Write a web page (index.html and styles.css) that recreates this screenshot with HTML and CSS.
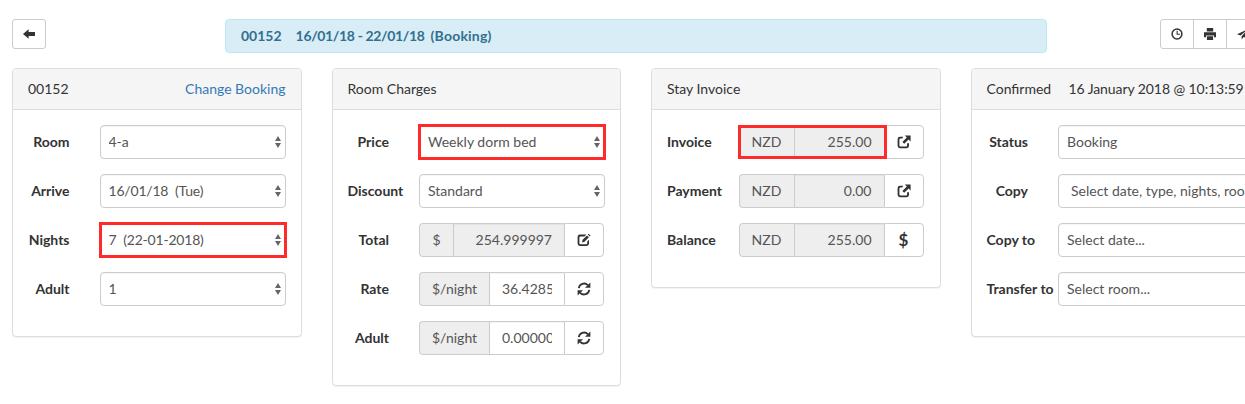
FILE: index.html
```html
<!DOCTYPE html>
<html lang="en">

<head>
    <meta charset="UTF-8">
    <meta name="viewport" content="width=device-width, initial-scale=1.0">
    <title>Booking 00152</title>
    <link rel="stylesheet" href="styles.css">
</head>

<body>
    <!-- Top bar -->
    <div class="top-bar">
        <button class="tool-btn back-btn" aria-label="Back">
            <svg class="icon" viewBox="0 0 12 12"><path d="M0 6 5.6 1.2V4H12V8H5.6V10.8Z" /></svg>
        </button>
        <div class="booking-alert">
            <span class="alert-number">00152</span>
            <span class="alert-dates">16/01/18 - 22/01/18</span>
            <span class="alert-state">(Booking)</span>
        </div>
        <div class="tool-group">
            <button class="tool-btn" aria-label="History">
                <svg class="icon" viewBox="0 0 12 12"><circle cx="6" cy="6" r="4.9" fill="none" stroke="#333" stroke-width="1.5" /><path d="M5.6 2.8H6.7V5.7H9V6.8H5.6Z" /></svg>
            </button>
            <button class="tool-btn" aria-label="Print">
                <svg class="icon" viewBox="0 0 12 12"><path d="M2.8 0H9.2V3.4H2.8ZM0 4.2H12V9.2H10V7.4H2V9.2H0ZM2.9 8.2H9.1V12H2.9Z" /></svg>
            </button>
            <button class="tool-btn" aria-label="Send">
                <svg class="icon" viewBox="0 0 12 12"><path d="M12 .5 0 6.2 3.6 7.4 10 2.2 4.6 8.2V11.6L6.7 9 9.4 10.2Z" /></svg>
            </button>
        </div>
    </div>

    <!-- Panels -->
    <div class="panels">
        <div class="panel">
            <div class="panel-heading">
                <span>00152</span>
                <a href="#">Change Booking</a>
            </div>
            <div class="panel-body">
                <div class="form-row">
                    <label>Room</label>
                    <select class="field"><option>4-a</option></select>
                </div>
                <div class="form-row">
                    <label>Arrive</label>
                    <select class="field date-field"><option>16/01/18&nbsp; (Tue)</option></select>
                </div>
                <div class="form-row">
                    <label>Nights</label>
                    <select class="field date-field marked"><option>7&nbsp; (22-01-2018)</option></select>
                </div>
                <div class="form-row">
                    <label>Adult</label>
                    <select class="field"><option>1</option></select>
                </div>
            </div>
        </div>

        <div class="panel">
            <div class="panel-heading"><span>Room Charges</span></div>
            <div class="panel-body">
                <div class="form-row">
                    <label>Price</label>
                    <select class="field marked"><option>Weekly dorm bed</option></select>
                </div>
                <div class="form-row">
                    <label>Discount</label>
                    <select class="field"><option>Standard</option></select>
                </div>
                <div class="form-row">
                    <label>Total</label>
                    <div class="input-group">
                        <span class="addon addon-sign">$</span>
                        <input type="text" value="254.999997" readonly>
                        <button class="group-btn" aria-label="Edit">
                            <svg class="icon" viewBox="0 0 14 14"><use href="#icon-edit" /></svg>
                        </button>
                    </div>
                </div>
                <div class="form-row">
                    <label>Rate</label>
                    <div class="input-group">
                        <span class="addon addon-night">$/night</span>
                        <input type="text" value="36.428571">
                        <button class="group-btn" aria-label="Refresh">
                            <svg class="icon" viewBox="0 0 14 14"><use href="#icon-refresh" /></svg>
                        </button>
                    </div>
                </div>
                <div class="form-row">
                    <label>Adult</label>
                    <div class="input-group">
                        <span class="addon addon-night">$/night</span>
                        <input type="text" value="0.000000">
                        <button class="group-btn" aria-label="Refresh">
                            <svg class="icon" viewBox="0 0 14 14"><use href="#icon-refresh" /></svg>
                        </button>
                    </div>
                </div>
            </div>
        </div>

        <div class="panel">
            <div class="panel-heading"><span>Stay Invoice</span></div>
            <div class="panel-body">
                <div class="form-row">
                    <label>Invoice</label>
                    <div class="input-group">
                        <div class="group-part marked-part">
                            <span class="addon addon-cur">NZD</span>
                            <input type="text" value="255.00" readonly>
                        </div>
                        <button class="group-btn" aria-label="Open invoice">
                            <svg class="icon" viewBox="0 0 14 14"><use href="#icon-open" /></svg>
                        </button>
                    </div>
                </div>
                <div class="form-row">
                    <label>Payment</label>
                    <div class="input-group">
                        <span class="addon addon-cur">NZD</span>
                        <input type="text" value="0.00" readonly>
                        <button class="group-btn" aria-label="Open payment">
                            <svg class="icon" viewBox="0 0 14 14"><use href="#icon-open" /></svg>
                        </button>
                    </div>
                </div>
                <div class="form-row">
                    <label>Balance</label>
                    <div class="input-group">
                        <span class="addon addon-cur">NZD</span>
                        <input type="text" value="255.00" readonly>
                        <button class="group-btn dollar-btn">$</button>
                    </div>
                </div>
            </div>
        </div>

        <div class="panel">
            <div class="panel-heading heading-start">
                <span class="status-name">Confirmed</span>
                <span class="status-date">16 January 2018 @ 10:13:59</span>
            </div>
            <div class="panel-body">
                <div class="form-row">
                    <label>Status</label>
                    <select class="field"><option>Booking</option></select>
                </div>
                <div class="form-row">
                    <label>Copy</label>
                    <button class="field copy-btn">Select date, type, nights, room...</button>
                </div>
                <div class="form-row">
                    <label>Copy to</label>
                    <select class="field"><option>Select date...</option></select>
                </div>
                <div class="form-row">
                    <label>Transfer to</label>
                    <select class="field"><option>Select room...</option></select>
                </div>
            </div>
        </div>
    </div>

    <!-- Shared icons -->
    <svg class="icon-defs" aria-hidden="true">
        <symbol id="icon-edit" viewBox="0 0 14 14">
            <path d="M9.3 1.6H3A2.4 2.4 0 0 0 .6 4V10.6A2.4 2.4 0 0 0 3 13H9.6A2.4 2.4 0 0 0 12 10.6V6.8L10.2 8.6V10.2A1 1 0 0 1 9.2 11.2H3.4A1 1 0 0 1 2.4 10.2V4.4A1 1 0 0 1 3.4 3.4H7.5Z" />
            <path d="M5 9.4 5.6 6.8 10 2.4 11.9 4.3 7.5 8.7ZM10.8 1.6 11.6.8 13.6 2.8 12.8 3.6Z" />
        </symbol>
        <symbol id="icon-open" viewBox="0 0 14 14">
            <path d="M6.2 1.8H3A2.4 2.4 0 0 0 .6 4.2V10.8A2.4 2.4 0 0 0 3 13.2H9.6A2.4 2.4 0 0 0 12 10.8V8.2H10.1V10.4A1 1 0 0 1 9.1 11.4H3.4A1 1 0 0 1 2.4 10.4V4.6A1 1 0 0 1 3.4 3.6H5.2Z" />
            <path d="M7.8.6H13.6V6.4L11.6 4.4 7.2 8.8 5.4 7 9.8 2.6Z" />
        </symbol>
        <symbol id="icon-refresh" viewBox="0 0 14 14">
            <path d="M1.8 6.2A5.2 5.2 0 0 1 10.8 3.2" fill="none" stroke="#333" stroke-width="1.8" />
            <path d="M13.4.4V5.8H8Z" />
            <path d="M12.2 7.8A5.2 5.2 0 0 1 3.2 10.8" fill="none" stroke="#333" stroke-width="1.8" />
            <path d="M.6 13.6V8.2H6Z" />
        </symbol>
    </svg>
</body>

</html>
```

FILE: styles.css
```css
/* Reset and Global Styles */
* {
    margin: 0;
    padding: 0;
    box-sizing: border-box;
}

body {
    font-family: Lato, "Open Sans", sans-serif;
    font-size: 14px;
    line-height: 20px;
    color: #333;
    background-color: #fff;
    width: 1245px;
    height: 404px;
    overflow: hidden;
}

button,
input,
select {
    font: inherit;
}

.icon {
    display: block;
    width: 12px;
    height: 12px;
    fill: #333;
}

.icon-defs {
    display: none;
}

/* Top Bar */
.top-bar {
    display: grid;
    grid-template-columns: 213px 822px 113px auto;
    align-items: start;
    padding: 19px 0 15px 12px;
}

.booking-alert {
    display: flex;
    height: 34px;
    padding: 6px 15px;
    border: 1px solid #bce8f1;
    border-radius: 4px;
    background-color: #d9edf7;
    color: #31708f;
    font-weight: bold;
    white-space: nowrap;
}

.alert-number {
    margin-right: 14px;
}

.alert-dates {
    margin-right: 6px;
    letter-spacing: -0.35px;
}

.alert-state {
    letter-spacing: 0.2px;
}

.tool-btn {
    display: flex;
    align-items: center;
    justify-content: center;
    width: 34px;
    height: 30px;
    border: 1px solid #ccc;
    border-radius: 3px;
    background-color: #fff;
}

.tool-group {
    grid-column: 4;
    display: flex;
    width: 100px;
}

.tool-group .tool-btn {
    border-radius: 0;
    margin-right: -1px;
}

.tool-group .tool-btn:first-child {
    border-radius: 3px 0 0 3px;
}

/* Panels */
.panels {
    display: flex;
    align-items: flex-start;
    gap: 30px;
    padding-left: 12px;
}

.panel {
    flex: 0 0 289.5px;
    border: 1px solid #ddd;
    border-radius: 4px;
    background-color: #fff;
    box-shadow: 0 1px 1px rgba(0, 0, 0, 0.05);
}

.panel-heading {
    display: flex;
    justify-content: space-between;
    height: 41px;
    padding: 10px 15px;
    border-bottom: 1px solid #ddd;
    border-radius: 3px 3px 0 0;
    background-color: #f5f5f5;
    white-space: nowrap;
}

.panel-heading a {
    color: #337ab7;
    text-decoration: none;
}

.heading-start {
    justify-content: flex-start;
}

.status-name {
    width: 82px;
}

.status-date {
    letter-spacing: -0.08px;
}

.panel-body {
    padding: 15px 15px 15px;
}

.form-row {
    display: flex;
    align-items: center;
    gap: 30px;
    height: 34px;
    margin-bottom: 15px;
}

.form-row label {
    flex: 0 0 41.5px;
    width: 41.5px;
    font-weight: bold;
    text-align: right;
    white-space: nowrap;
}

/* Form Controls */
.field {
    flex: 1;
    min-width: 0;
    height: 34px;
    padding: 0 24px 0 8px;
    border: 1px solid #ccc;
    border-radius: 4px;
    color: #555;
    appearance: none;
    background: #fff url("data:image/svg+xml,%3Csvg xmlns='http://www.w3.org/2000/svg' width='6' height='12'%3E%3Cpath d='M3 0 6 5H0ZM3 12 0 7H6Z' fill='%23666'/%3E%3C/svg%3E") no-repeat right 4px center;
    box-shadow: inset 0 1px 1px rgba(0, 0, 0, 0.04);
}

.date-field {
    letter-spacing: -0.2px;
}

.copy-btn {
    padding: 0 0 0 12px;
    background: #fff;
    text-align: left;
    white-space: nowrap;
    overflow: hidden;
}

.marked {
    border-radius: 0;
    outline: 3px solid #ff2a2a;
    outline-offset: -2px;
}

.input-group {
    flex: 1;
    min-width: 0;
    display: flex;
    height: 34px;
    margin-right: 1px;
}

.group-part {
    position: relative;
    flex: 1;
    min-width: 0;
    display: flex;
}

/* red annotation laid over the amount */
.marked-part::after {
    content: "";
    position: absolute;
    top: 0;
    bottom: 0;
    left: -1px;
    right: -3px;
    border: 3px solid #ff2a2a;
}

.addon {
    display: flex;
    align-items: center;
    justify-content: center;
    flex: none;
    border: 1px solid #ccc;
    border-right: 0;
    border-radius: 4px 0 0 4px;
    background-color: #eee;
    color: #555;
}

.addon-sign {
    width: 34px;
}

.addon-night {
    width: 70px;
}

.addon-cur {
    width: 55px;
}

.input-group input {
    flex: 1;
    min-width: 0;
    width: 0;
    padding: 0 12px;
    border: 1px solid #ccc;
    border-right: 0;
    color: #555;
    text-align: right;
    box-shadow: inset 0 1px 1px rgba(0, 0, 0, 0.05);
}

.input-group input[readonly] {
    background-color: #eee;
}

.group-btn {
    display: flex;
    align-items: center;
    justify-content: center;
    flex: 0 0 40px;
    border: 1px solid #ccc;
    border-radius: 0 4px 4px 0;
    background-color: #fff;
    color: #333;
}

.group-btn .icon {
    width: 14px;
    height: 14px;
}

.dollar-btn {
    font-size: 17px;
    font-weight: bold;
}
```
